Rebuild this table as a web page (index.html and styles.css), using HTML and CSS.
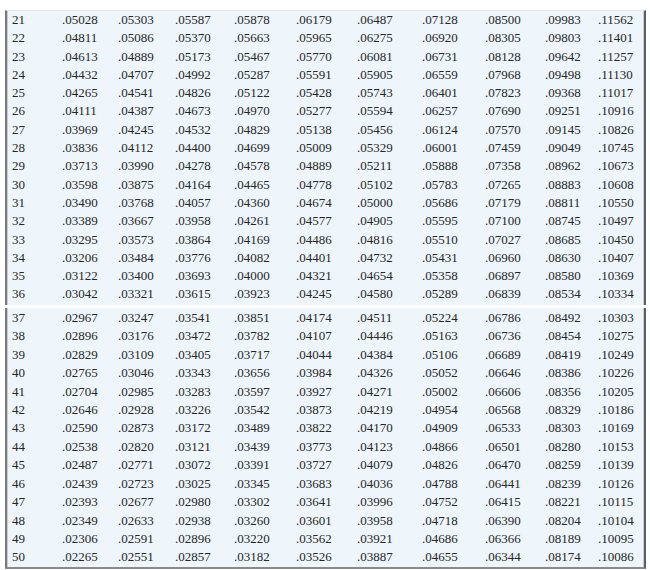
FILE: index.html
```html
<!DOCTYPE html>
<html>
<head>
<meta charset="utf-8">
<link rel="stylesheet" href="styles.css">
</head>
<body>
<div class="page">
  <div class="box box-top">
    <div class="row"><span>21</span><span>.05028</span><span>.05303</span><span>.05587</span><span>.05878</span><span>.06179</span><span>.06487</span><span>.07128</span><span>.08500</span><span>.09983</span><span>.11562</span></div>
    <div class="row"><span>22</span><span>.04811</span><span>.05086</span><span>.05370</span><span>.05663</span><span>.05965</span><span>.06275</span><span>.06920</span><span>.08305</span><span>.09803</span><span>.11401</span></div>
    <div class="row"><span>23</span><span>.04613</span><span>.04889</span><span>.05173</span><span>.05467</span><span>.05770</span><span>.06081</span><span>.06731</span><span>.08128</span><span>.09642</span><span>.11257</span></div>
    <div class="row"><span>24</span><span>.04432</span><span>.04707</span><span>.04992</span><span>.05287</span><span>.05591</span><span>.05905</span><span>.06559</span><span>.07968</span><span>.09498</span><span>.11130</span></div>
    <div class="row"><span>25</span><span>.04265</span><span>.04541</span><span>.04826</span><span>.05122</span><span>.05428</span><span>.05743</span><span>.06401</span><span>.07823</span><span>.09368</span><span>.11017</span></div>
    <div class="row"><span>26</span><span>.04111</span><span>.04387</span><span>.04673</span><span>.04970</span><span>.05277</span><span>.05594</span><span>.06257</span><span>.07690</span><span>.09251</span><span>.10916</span></div>
    <div class="row"><span>27</span><span>.03969</span><span>.04245</span><span>.04532</span><span>.04829</span><span>.05138</span><span>.05456</span><span>.06124</span><span>.07570</span><span>.09145</span><span>.10826</span></div>
    <div class="row"><span>28</span><span>.03836</span><span>.04112</span><span>.04400</span><span>.04699</span><span>.05009</span><span>.05329</span><span>.06001</span><span>.07459</span><span>.09049</span><span>.10745</span></div>
    <div class="row"><span>29</span><span>.03713</span><span>.03990</span><span>.04278</span><span>.04578</span><span>.04889</span><span>.05211</span><span>.05888</span><span>.07358</span><span>.08962</span><span>.10673</span></div>
    <div class="row"><span>30</span><span>.03598</span><span>.03875</span><span>.04164</span><span>.04465</span><span>.04778</span><span>.05102</span><span>.05783</span><span>.07265</span><span>.08883</span><span>.10608</span></div>
    <div class="row"><span>31</span><span>.03490</span><span>.03768</span><span>.04057</span><span>.04360</span><span>.04674</span><span>.05000</span><span>.05686</span><span>.07179</span><span>.08811</span><span>.10550</span></div>
    <div class="row"><span>32</span><span>.03389</span><span>.03667</span><span>.03958</span><span>.04261</span><span>.04577</span><span>.04905</span><span>.05595</span><span>.07100</span><span>.08745</span><span>.10497</span></div>
    <div class="row"><span>33</span><span>.03295</span><span>.03573</span><span>.03864</span><span>.04169</span><span>.04486</span><span>.04816</span><span>.05510</span><span>.07027</span><span>.08685</span><span>.10450</span></div>
    <div class="row"><span>34</span><span>.03206</span><span>.03484</span><span>.03776</span><span>.04082</span><span>.04401</span><span>.04732</span><span>.05431</span><span>.06960</span><span>.08630</span><span>.10407</span></div>
    <div class="row"><span>35</span><span>.03122</span><span>.03400</span><span>.03693</span><span>.04000</span><span>.04321</span><span>.04654</span><span>.05358</span><span>.06897</span><span>.08580</span><span>.10369</span></div>
    <div class="row"><span>36</span><span>.03042</span><span>.03321</span><span>.03615</span><span>.03923</span><span>.04245</span><span>.04580</span><span>.05289</span><span>.06839</span><span>.08534</span><span>.10334</span></div>
  </div>
  <div class="box box-bottom">
    <div class="row"><span>37</span><span>.02967</span><span>.03247</span><span>.03541</span><span>.03851</span><span>.04174</span><span>.04511</span><span>.05224</span><span>.06786</span><span>.08492</span><span>.10303</span></div>
    <div class="row"><span>38</span><span>.02896</span><span>.03176</span><span>.03472</span><span>.03782</span><span>.04107</span><span>.04446</span><span>.05163</span><span>.06736</span><span>.08454</span><span>.10275</span></div>
    <div class="row"><span>39</span><span>.02829</span><span>.03109</span><span>.03405</span><span>.03717</span><span>.04044</span><span>.04384</span><span>.05106</span><span>.06689</span><span>.08419</span><span>.10249</span></div>
    <div class="row"><span>40</span><span>.02765</span><span>.03046</span><span>.03343</span><span>.03656</span><span>.03984</span><span>.04326</span><span>.05052</span><span>.06646</span><span>.08386</span><span>.10226</span></div>
    <div class="row"><span>41</span><span>.02704</span><span>.02985</span><span>.03283</span><span>.03597</span><span>.03927</span><span>.04271</span><span>.05002</span><span>.06606</span><span>.08356</span><span>.10205</span></div>
    <div class="row"><span>42</span><span>.02646</span><span>.02928</span><span>.03226</span><span>.03542</span><span>.03873</span><span>.04219</span><span>.04954</span><span>.06568</span><span>.08329</span><span>.10186</span></div>
    <div class="row"><span>43</span><span>.02590</span><span>.02873</span><span>.03172</span><span>.03489</span><span>.03822</span><span>.04170</span><span>.04909</span><span>.06533</span><span>.08303</span><span>.10169</span></div>
    <div class="row"><span>44</span><span>.02538</span><span>.02820</span><span>.03121</span><span>.03439</span><span>.03773</span><span>.04123</span><span>.04866</span><span>.06501</span><span>.08280</span><span>.10153</span></div>
    <div class="row"><span>45</span><span>.02487</span><span>.02771</span><span>.03072</span><span>.03391</span><span>.03727</span><span>.04079</span><span>.04826</span><span>.06470</span><span>.08259</span><span>.10139</span></div>
    <div class="row"><span>46</span><span>.02439</span><span>.02723</span><span>.03025</span><span>.03345</span><span>.03683</span><span>.04036</span><span>.04788</span><span>.06441</span><span>.08239</span><span>.10126</span></div>
    <div class="row"><span>47</span><span>.02393</span><span>.02677</span><span>.02980</span><span>.03302</span><span>.03641</span><span>.03996</span><span>.04752</span><span>.06415</span><span>.08221</span><span>.10115</span></div>
    <div class="row"><span>48</span><span>.02349</span><span>.02633</span><span>.02938</span><span>.03260</span><span>.03601</span><span>.03958</span><span>.04718</span><span>.06390</span><span>.08204</span><span>.10104</span></div>
    <div class="row"><span>49</span><span>.02306</span><span>.02591</span><span>.02896</span><span>.03220</span><span>.03562</span><span>.03921</span><span>.04686</span><span>.06366</span><span>.08189</span><span>.10095</span></div>
    <div class="row"><span>50</span><span>.02265</span><span>.02551</span><span>.02857</span><span>.03182</span><span>.03526</span><span>.03887</span><span>.04655</span><span>.06344</span><span>.08174</span><span>.10086</span></div>
  </div>
</div>
</body>
</html>
```
FILE: styles.css
```css
html, body {
  margin: 0;
  padding: 0;
  background: #ffffff;
}

.page {
  padding: 10px 0 0 5px;
  width: 641px;
  display: flex;
  flex-direction: column;
  gap: 3px;
  font-family: "Liberation Serif", "Times New Roman", serif;
  font-size: 13px;
  color: #262626;
}

.box {
  background: #eef6fb;
  border-left: 2px solid #7a7a7a;
  border-right: 2px solid #5e5e5e;
  box-shadow: inset 1px 0 0 #c9ccd0, inset -1px 0 0 #c9ccd0;
}

.box-top {
  padding: 0 0 1px 0;
  border-top: 1px solid #e2e6ea;
}

.box-top .row {
  height: 18.3px;
  line-height: 18.3px;
}

.box-bottom {
  padding: 1px 0 0 0;
  border-bottom: 2px solid #8a8a8a;
}

.box-bottom .row {
  height: 18.45px;
  line-height: 18.45px;
}

.row {
  display: grid;
  grid-template-columns: 50px 56px 57px 59px 62px 61px 65px 63px 60px 53px auto;
  padding-left: 5px;
  white-space: nowrap;
}
```
